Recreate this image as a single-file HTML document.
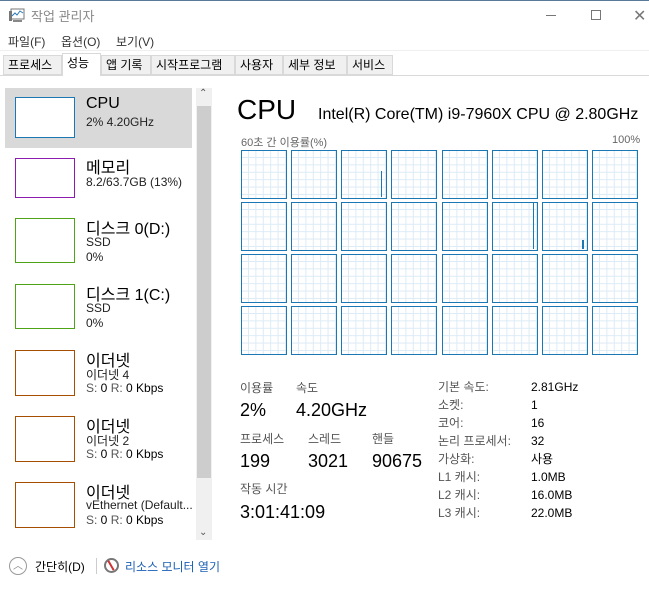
<!DOCTYPE html>
<html><head><meta charset="utf-8"><style>
*{margin:0;padding:0;box-sizing:border-box}
body{width:649px;height:592px;background:#fff;font-family:"Liberation Sans","Noto Sans CJK KR",sans-serif;position:relative;overflow:hidden;color:#000}
.a{position:absolute;white-space:nowrap}
.tab{position:absolute;top:55px;height:20px;background:#f0f0f0;border:1px solid #d9d9d9;font-size:12px;line-height:18px;padding-left:4px}
.th{position:absolute;left:15px;width:60px;background:#fff;border:1px solid}
.t1{font-size:16px}
.t2{font-size:12px;color:#222}
.g{position:absolute;width:46px;height:49px;border:1.5px solid #1b78b5;background-color:#fff;
background-image:linear-gradient(to right,#dcebf6 1px,transparent 1px),linear-gradient(to bottom,#dcebf6 1px,transparent 1px);
background-size:7.4px 7.4px;background-position:6px 6px}
.lb{font-size:12px;color:#555}
.v{font-size:18px}
</style></head><body>
<div class="a" style="left:0;top:0;width:649px;height:1px;background:#5a7a9a"></div>
<svg class="a" style="left:9px;top:8px" width="16" height="14"><rect x="2" y="1" width="13" height="10" fill="#fff" stroke="#777"/><polyline points="3,8 6,5 8,7 11,3 14,5" fill="none" stroke="#2a7ab8" stroke-width="1"/><rect x="0" y="3" width="3" height="10" fill="#777"/><rect x="4" y="12" width="9" height="2" fill="#888"/></svg>
<div class="a" style="left:31px;top:6px;font-size:13px;color:#888">작업 관리자</div>
<div class="a" style="left:546px;top:15px;width:10px;height:1px;background:#777"></div>
<div class="a" style="left:591px;top:10px;width:10px;height:10px;border:1px solid #777"></div>
<div class="a" style="left:633px;top:6px;font-size:16px;color:#777">✕</div>
<div class="a" style="left:8px;top:33px;font-size:12px;color:#333">파일(F)</div>
<div class="a" style="left:61px;top:33px;font-size:12px;color:#333">옵션(O)</div>
<div class="a" style="left:116px;top:33px;font-size:12px;color:#333">보기(V)</div>
<div class="a" style="left:0;top:50px;width:649px;height:1px;background:#efefef"></div>
<div class="a" style="left:0;top:75px;width:649px;height:1px;background:#d9d9d9"></div>
<div class="tab" style="left:3px;width:59px">프로세스</div>
<div class="tab" style="left:62px;top:53px;height:23px;width:39px;background:#fff;border-bottom:none">성능</div>
<div class="tab" style="left:101px;width:50px">앱 기록</div>
<div class="tab" style="left:151px;width:84px">시작프로그램</div>
<div class="tab" style="left:235px;width:48px">사용자</div>
<div class="tab" style="left:283px;width:64px">세부 정보</div>
<div class="tab" style="left:347px;width:46px">서비스</div>

<div class="a" style="left:5px;top:88px;width:187px;height:60px;background:#d9d9d9"></div>
<div class="th" style="top:97px;height:41px;border-color:#1b78b5"></div>
<div class="a t1" style="left:86px;top:95px">CPU</div><div class="a t2" style="left:86px;top:115px">2% 4.20GHz</div>
<div class="th" style="top:158px;height:40px;border-color:#8e1bb0"></div>
<div class="a t1" style="left:86px;top:154px">메모리</div><div class="a t2" style="left:86px;top:175px">8.2/63.7GB (13%)</div>
<div class="th" style="top:218px;height:45px;border-color:#4ea417"></div>
<div class="a t1" style="left:86px;top:215px">디스크 0(D:)</div><div class="a t2" style="left:86px;top:235px">SSD</div><div class="a t2" style="left:86px;top:250px">0%</div>
<div class="th" style="top:284px;height:45px;border-color:#4ea417"></div>
<div class="a t1" style="left:86px;top:281px">디스크 1(C:)</div><div class="a t2" style="left:86px;top:301px">SSD</div><div class="a t2" style="left:86px;top:316px">0%</div>
<div class="th" style="top:350px;height:46px;border-color:#a74f01"></div>
<div class="a t1" style="left:86px;top:347px">이더넷</div><div class="a t2" style="left:86px;top:366px">이더넷 4</div><div class="a t2" style="left:86px;top:381px;color:#555">S: <span style="color:#000">0</span> R: <span style="color:#000">0 Kbps</span></div>
<div class="th" style="top:416px;height:46px;border-color:#a74f01"></div>
<div class="a t1" style="left:86px;top:413px">이더넷</div><div class="a t2" style="left:86px;top:432px">이더넷 2</div><div class="a t2" style="left:86px;top:447px;color:#555">S: <span style="color:#000">0</span> R: <span style="color:#000">0 Kbps</span></div>
<div class="th" style="top:482px;height:46px;border-color:#a74f01"></div>
<div class="a t1" style="left:86px;top:479px">이더넷</div><div class="a t2" style="left:86px;top:498px">vEthernet (Default...</div><div class="a t2" style="left:86px;top:513px;color:#555">S: <span style="color:#000">0</span> R: <span style="color:#000">0 Kbps</span></div>

<div class="a" style="left:196px;top:88px;width:16px;height:452px;background:#f0f0f0"></div>
<div class="a" style="left:197px;top:106px;width:14px;height:372px;background:#cdcdcd"></div>
<div class="a" style="left:199px;top:88px;font-size:10px;color:#555">⌃</div>
<div class="a" style="left:199px;top:527px;font-size:10px;color:#555">⌄</div>

<div class="a" style="left:237px;top:94px;font-size:28px">CPU</div>
<div class="a" style="left:318px;top:106px;font-size:16px">Intel(R) Core(TM) i9-7960X CPU @ 2.80GHz</div>
<div class="a" style="left:241px;top:134px;font-size:11px;color:#666">60초 간 이용률(%)</div>
<div class="a" style="left:612px;top:134px;font-size:11px;color:#666">100%</div>
<div id="grid"></div>
<script>
var h='',xs=[241,291,341,391,442,492,542,592],ys=[150,202,254,306];
ys.forEach(function(y){xs.forEach(function(x){h+='<div class="g" style="left:'+x+'px;top:'+y+'px"></div>';});});
document.getElementById('grid').innerHTML=h;
</script>
<div class="a" style="left:381px;top:171px;width:1px;height:26px;background:#1b78b5"></div>
<div class="a" style="left:533px;top:203px;width:1px;height:46px;background:#1b78b5"></div>
<div class="a" style="left:582px;top:240px;width:2px;height:9px;background:#1b78b5"></div>

<div class="a lb" style="left:240px;top:379px">이용률</div>
<div class="a lb" style="left:296px;top:379px">속도</div>
<div class="a v" style="left:240px;top:400px">2%</div>
<div class="a v" style="left:296px;top:400px">4.20GHz</div>
<div class="a lb" style="left:240px;top:430px">프로세스</div>
<div class="a lb" style="left:308px;top:430px">스레드</div>
<div class="a lb" style="left:372px;top:430px">핸들</div>
<div class="a v" style="left:240px;top:451px">199</div>
<div class="a v" style="left:308px;top:451px">3021</div>
<div class="a v" style="left:372px;top:451px">90675</div>
<div class="a lb" style="left:240px;top:480px">작동 시간</div>
<div class="a v" style="left:240px;top:502px">3:01:41:09</div>
<div class="a" style="left:438px;top:378px;font-size:12px;line-height:18px;color:#555">기본 속도:<br>소켓:<br>코어:<br>논리 프로세서:<br>가상화:<br>L1 캐시:<br>L2 캐시:<br>L3 캐시:</div>
<div class="a" style="left:531px;top:378px;font-size:12px;line-height:18px">2.81GHz<br>1<br>16<br>32<br>사용<br>1.0MB<br>16.0MB<br>22.0MB</div>

<div class="a" style="left:9px;top:557px;width:18px;height:18px;border:1px solid #999;border-radius:50%;font-size:10px;color:#888;text-align:center;line-height:18px">︿</div>
<div class="a" style="left:35px;top:558px;font-size:12px">간단히(D)</div>
<div class="a" style="left:96px;top:558px;width:1px;height:16px;background:#ccc"></div>
<div class="a" style="left:104px;top:558px;width:15px;height:15px;border:2px solid #777;border-radius:50%;background:#fff"></div>
<div class="a" style="left:110px;top:560px;width:2px;height:11px;background:#c33;transform:rotate(-30deg)"></div>
<div class="a" style="left:125px;top:558px;font-size:12px;color:#1a5fb4">리소스 모니터 열기</div>
</body></html>
